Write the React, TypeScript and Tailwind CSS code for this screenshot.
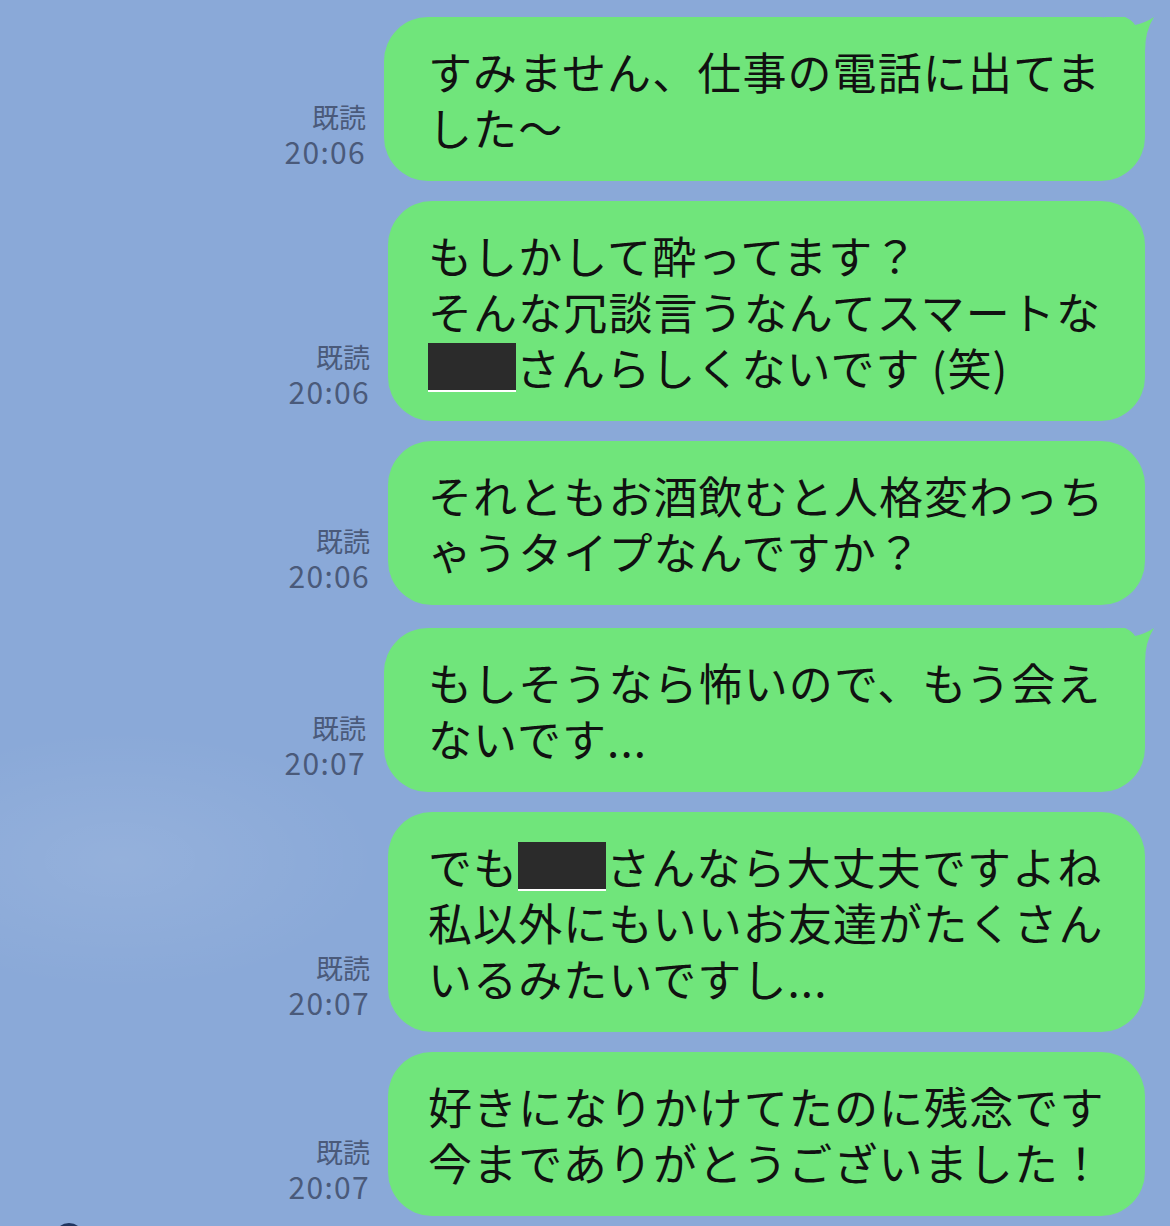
import type { ReactNode } from 'react';

type Msg = {
  time: string;
  tail?: boolean;
  lines: ReactNode[];
};

// blacked-out name
function Redact() {
  return (
    <span className="relative top-[4px] inline-block w-[88px] h-[49px] bg-[#2b2b2b] border-b-2 border-white align-top" />
  );
}

const messages: Msg[] = [
  { time: '20:06', tail: true, lines: ['すみません、仕事の電話に出てま', 'した〜'] },
  {
    time: '20:06',
    lines: [
      'もしかして酔ってます？',
      'そんな冗談言うなんてスマートな',
      <>
        <Redact />
        さんらしくないです (笑)
      </>,
    ],
  },
  { time: '20:06', lines: ['それともお酒飲むと人格変わっち', 'ゃうタイプなんですか？'] },
  { time: '20:07', tail: true, lines: ['もしそうなら怖いので、もう会え', 'ないです...'] },
  {
    time: '20:07',
    lines: [
      <>
        でも
        <Redact />
        さんなら大丈夫ですよね
      </>,
      '私以外にもいいお友達がたくさん',
      'いるみたいですし...',
    ],
  },
  { time: '20:07', lines: ['好きになりかけてたのに残念です', '今までありがとうございました！'] },
];

// little horn on the first bubble of a group
function Tail() {
  return (
    <svg className="absolute top-0 -right-[10px]" width="50" height="60" viewBox="0 0 50 60">
      <path d="M0 0 L20 0 Q27 3 30 8 Q40 6 49 0 Q40 14 40 34 L40 60 L0 60 Z" fill="#70e57b" />
    </svg>
  );
}

function Row({ msg }: { msg: Msg }) {
  return (
    <div className={msg.tail ? 'flex items-end justify-end gap-[18px] mt-[3px]' : 'flex items-end justify-end gap-[18px]'}>
      <div className="flex flex-col items-end mb-[12px] text-[#4a5a7a] font-['Noto_Sans_CJK_JP',sans-serif]">
        <span className="text-[27px] leading-[35px]">既読</span>
        <span className="text-[30px] leading-[35px] tracking-[1.3px]">{msg.time}</span>
      </div>
      <div
        className={
          msg.tail
            ? 'relative w-[761px] rounded-[44px] bg-[#70e57b] pl-[44px] py-[26px]'
            : 'relative w-[757px] rounded-[44px] bg-[#70e57b] pl-[40px] py-[26px]'
        }
      >
        {msg.tail && <Tail />}
        <div className="relative text-[44px] leading-[56px] tracking-[1.1px] text-[#111] whitespace-nowrap font-['Noto_Sans_CJK_JP',sans-serif]">
          {msg.lines.map((l, i) => (
            <div key={i}>{l}</div>
          ))}
        </div>
      </div>
    </div>
  );
}

export default function App() {
  return (
    <div className="relative w-[1170px] h-[1226px] overflow-hidden bg-[#8aa9d8] bg-[radial-gradient(ellipse_260px_130px_at_120px_860px,rgba(255,255,255,0.09),transparent)]">
      <div className="absolute left-[54px] top-[1223px] w-[30px] h-[30px] rounded-full bg-[#1f3560]" />

      <div className="relative flex flex-col gap-[20px] pt-[14px] pr-[25px]">
        {messages.map((m, i) => (
          <Row key={i} msg={m} />
        ))}
      </div>
    </div>
  );
}
